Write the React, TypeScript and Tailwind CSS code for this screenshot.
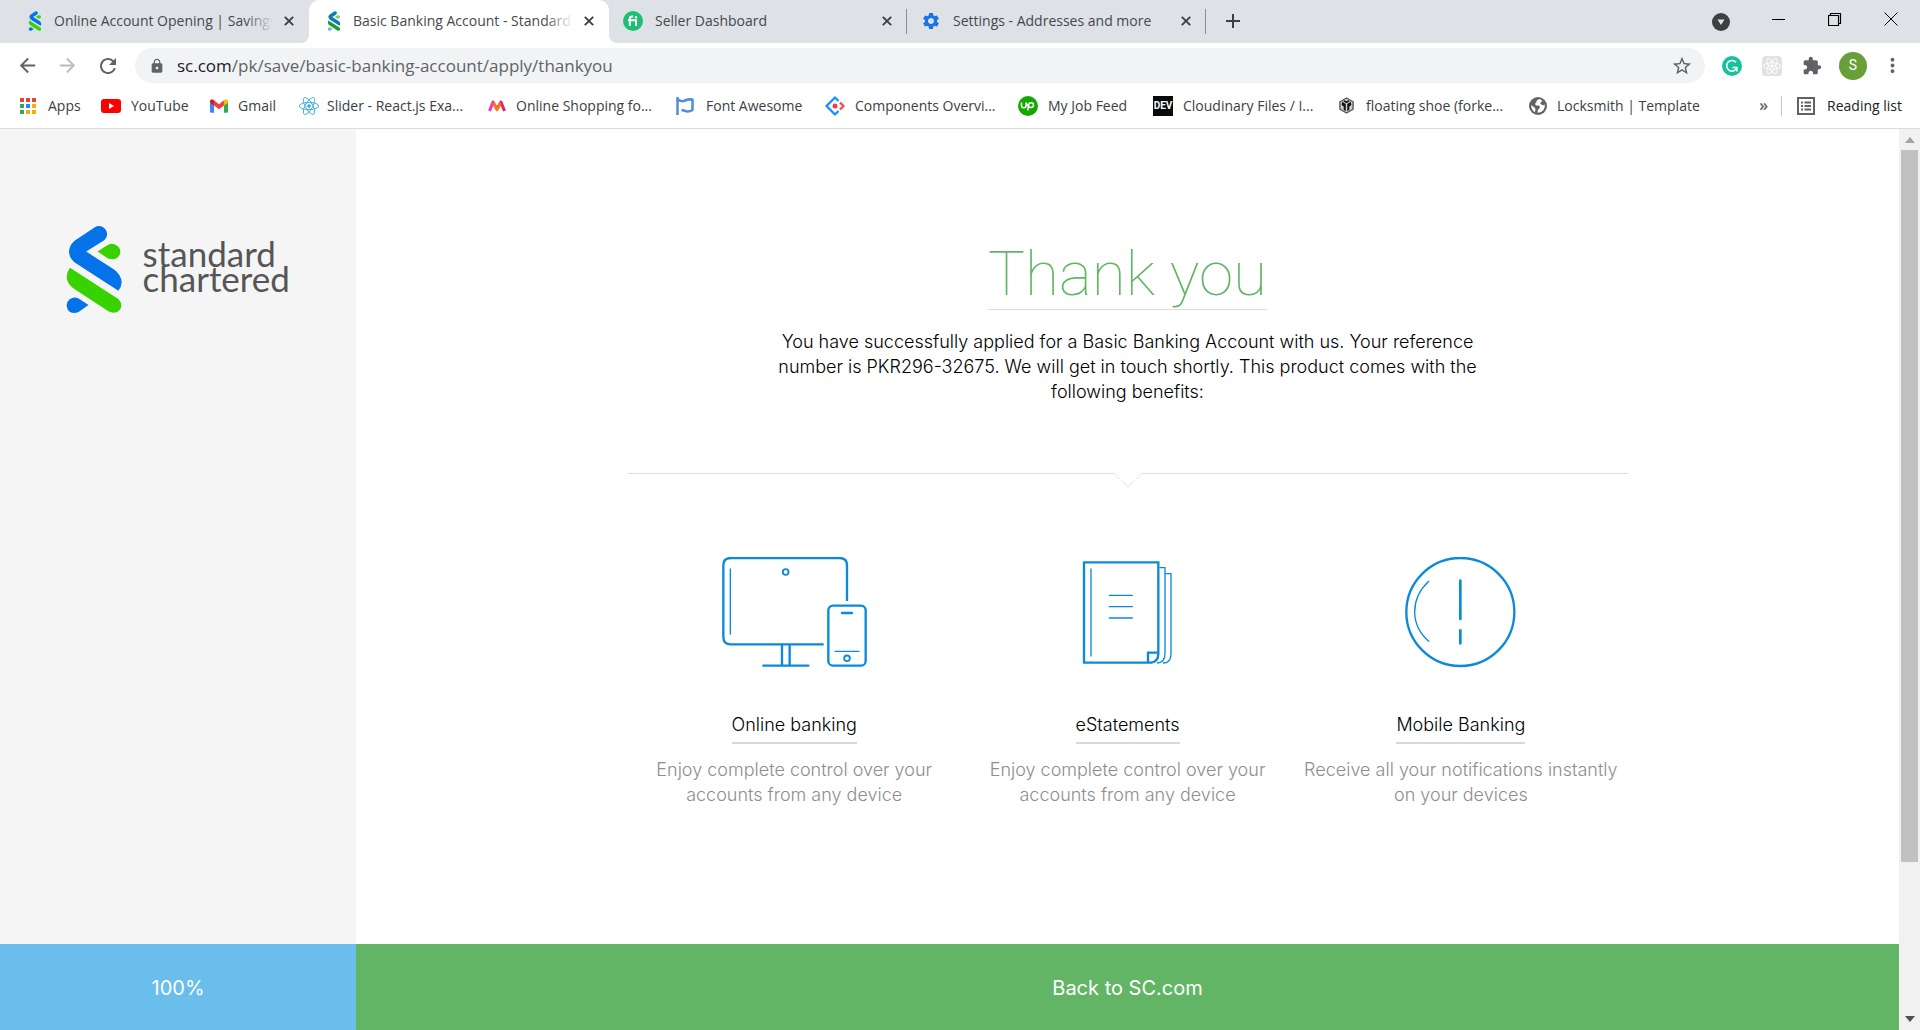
import React from "react";
import {
  MdArrowBack,
  MdArrowForward,
  MdExtension,
  MdLock,
  MdMoreVert,
  MdRefresh,
  MdSettings,
  MdStarBorder,
} from "react-icons/md";
import { FaReact } from "react-icons/fa";

/* ---------- logos and small drawings ---------- */

type RibbonProps = {
  className: string;
  top: string;
  drop: string;
  band: string;
  tail: string;
};

function Ribbon({ className, top, drop, band, tail }: RibbonProps) {
  return (
    <svg viewBox="76 76 169 266" className={className} aria-hidden="true">
      <path
        fill={top}
        d="M104 121 L162 82 Q174 74 187 81 Q200 89 200 103 Q199 115 189 122 L137 155 L221 209 Q243 225 244 248 Q243 263 234 273 L107 191 Q86 178 85 154 Q87 133 104 121Z"
      />
      <path fill={drop} d="M171 155 L203 134 Q218 128 230 137 Q240 144 240 155 Q240 167 230 174 Q219 181 203 176Z" />
      <path
        fill={band}
        d="M88 204 L221 290 Q243 301 243 317 Q242 332 229 338 Q216 342 204 335 L99 266 Q79 253 78 232 Q79 215 88 204Z"
      />
      <path fill={tail} d="M144 316 L113 296 Q99 290 87 299 Q78 306 78 317 Q79 331 88 337 Q100 343 114 337Z" />
    </svg>
  );
}

function CloseIcon() {
  return (
    <svg viewBox="0 0 10 10" className="h-[10px] w-[10px]" aria-hidden="true">
      <path d="M.8 .8 L9.2 9.2 M9.2 .8 L.8 9.2" stroke="#3c4043" strokeWidth="1.9" />
    </svg>
  );
}

function FiverrIcon() {
  return (
    <svg viewBox="0 0 20 20" className="h-5 w-5" aria-hidden="true">
      <circle cx="10" cy="10" r="10" fill="#1dbf73" />
      <path d="M6.800 15V8q0-2.400 2.400-2.400h1M5 9.200h8V15" fill="none" stroke="#fff" strokeWidth="2" />
      <circle cx="13" cy="6.200" r="1.200" fill="#fff" />
    </svg>
  );
}

function AppsIcon() {
  const colours = ["#ea4335", "#ea4335", "#ea4335", "#34a853", "#1a8cff", "#fbab05", "#34a853", "#fbab05", "#fbab05"];
  return (
    <svg viewBox="0 0 16 16" className="h-4 w-4" aria-hidden="true">
      {colours.map((fill, i) => (
        <rect key={i} x={(i % 3) * 6} y={Math.floor(i / 3) * 6} width="4" height="4" fill={fill} />
      ))}
    </svg>
  );
}

function YouTubeIcon() {
  return (
    <svg viewBox="0 0 20 14" className="h-[14px] w-5" aria-hidden="true">
      <rect width="20" height="14" rx="3" fill="#f00" />
      <path d="M8 4v6l5-3z" fill="#fff" />
    </svg>
  );
}

function GmailIcon() {
  return (
    <svg viewBox="0 0 20 15" className="h-[14px] w-[18px]" aria-hidden="true">
      <path d="M0 3v10.500Q0 15 1.500 15h3V6z" fill="#4285f4" />
      <path d="M20 3v10.500q0 1.500-1.500 1.500h-3V6z" fill="#34a853" />
      <path d="M4.500 1.200 L10 5.500 L15.500 1.200V7L10 11.200 L4.500 7z" fill="#ea4335" />
      <path d="M0 2.300Q0 .3 1.800 0 Q3 0 4.500 1.200V7L0 3.800z" fill="#c5221f" />
      <path d="M20 2.300Q20 .3 18.200 0 Q17 0 15.500 1.200V7L20 3.800z" fill="#fbbc04" />
    </svg>
  );
}

function MyntraIcon() {
  return (
    <svg viewBox="0 0 18 12" className="h-3 w-[18px]" aria-hidden="true">
      <path d="M1.500 11 L5 2 L9 9" fill="none" stroke="#f13ab1" strokeWidth="3" strokeLinejoin="round" />
      <path d="M9 9 L13 2 L16.500 11" fill="none" stroke="#e6206a" strokeWidth="3" strokeLinejoin="round" />
      <path d="M5.500 3 L9 10 L12.500 3" fill="none" stroke="#fd7a10" strokeWidth="2.600" strokeLinejoin="round" />
    </svg>
  );
}

function FlagIcon() {
  return (
    <svg viewBox="0 0 18 18" className="h-[18px] w-[18px]" aria-hidden="true">
      <path
        d="M1.500 0v18 M1.500 3h1.500q2.500 2 6 .5 t7.500-1v10.500 q-4 2.500-7.500 .8 l-3.500-.8"
        fill="none"
        stroke="#528dd7"
        strokeWidth="2.500"
        strokeLinejoin="round"
      />
    </svg>
  );
}

function DesignIcon() {
  return (
    <svg viewBox="0 0 20 20" className="h-5 w-5" aria-hidden="true">
      <path d="M13.500 5 L10 1.500 L1.500 10 L10 18.500 L13.500 15" fill="none" stroke="#1890ff" strokeWidth="2.400" strokeLinejoin="round" />
      <path d="M15 6.500 L18.500 10 L15 13.500" fill="none" stroke="#fa4a4d" strokeWidth="2.400" strokeLinejoin="round" />
      <circle cx="10" cy="10" r="2.500" fill="#f5384a" />
    </svg>
  );
}

function UpworkIcon() {
  return (
    <svg viewBox="0 0 20 20" className="h-5 w-5" aria-hidden="true">
      <circle cx="10" cy="10" r="10" fill="#14a800" />
      <path
        d="M3.500 6.500v3a2.300 2.300 0 0 0 4.600 0v-3 c1 3 2.500 5 5 5a2.400 2.400 0 1 0-2.400-2.400 L9.600 14.500"
        fill="none"
        stroke="#fff"
        strokeWidth="1.500"
      />
    </svg>
  );
}

function DevIcon() {
  return (
    <span className="flex h-5 w-5 items-center justify-center bg-[#0a0a0a] font-['Roboto'] text-[10px] font-bold text-white" aria-hidden="true">
      DEV
    </span>
  );
}

function CubeIcon() {
  return (
    <svg viewBox="0 0 16 18" className="h-[17px] w-[15px]" strokeLinejoin="round" aria-hidden="true">
      <path d="M8 1 L15 5v8L8 17L1 13V5z" fill="#d0d0d0" stroke="#555" strokeWidth="1.500" />
      <path d="M3.500 5 L7.200 7.500v7.500L5 13.500V10L2.800 8.500z M12.500 5 L8.800 7.500v7.500L11 13.500V10L13.200 8.500z M8 6.500L4.500 4.500L6 3.500L8 4.500L10 3.500L11.500 4.500z" fill="#111" />
    </svg>
  );
}

function GlobeIcon() {
  return (
    <svg viewBox="0 0 18 18" className="h-[18px] w-[18px]" aria-hidden="true">
      <circle cx="9" cy="9" r="9" fill="#5f6368" />
      <path d="M10.500 2 Q6.500 3.500 7.500 5.500 Q5 6.500 7 8.500 H10 Q11.500 9.500 10.500 11.500 L9 12.500 L8.500 15.800 Q12 16 14.500 13 Q16.300 10.500 15.800 7.500 Q14 9 12.500 7.500 Q10.500 7 12 5 L13.500 4Q12 2.300 10.500 2z" fill="#fff" />
      <path d="M2.200 8 L5.500 10.500 L6.500 12 L6 15.200 Q2 13 2.200 8z" fill="#fff" />
    </svg>
  );
}

function GrammarlyIcon() {
  return (
    <svg viewBox="0 0 20 20" className="h-5 w-5" aria-hidden="true">
      <circle cx="10" cy="10" r="10" fill="#15c39a" />
      <path d="M14 6.300 A5.300 5.300 0 1 0 14.800 12 M10.500 11.500h4.300v4" fill="none" stroke="#fff" strokeWidth="1.600" />
    </svg>
  );
}

function ReadingListIcon() {
  return (
    <svg viewBox="0 0 18 18" className="h-[18px] w-[18px]" aria-hidden="true">
      <path d="M1 1h16v16H1z" fill="none" stroke="#5f6368" strokeWidth="2" />
      <path d="M4 5.500h2M4 9h2M4 12.500h2M7.500 5.500h6.500M7.500 9h6.500M7.500 12.500h6.500" stroke="#5f6368" strokeWidth="1.800" />
    </svg>
  );
}

/* ---------- browser chrome ---------- */

function TabStrip() {
  return (
    <div className="flex h-[43px] shrink-0 bg-[#dee1e6] pr-4">
      <div className="flex w-[309px] items-center pb-px pl-7 pr-3">
        <Ribbon className="h-5 w-[14px]" top="#0473ea" drop="#38d200" band="#38d200" tail="#0473ea" />
        <TabTitle fade="from-transparent to-[#dee1e6]">Online Account Opening | Savings</TabTitle>
        <TabClose />
      </div>
      <div className="relative flex w-[300px] items-center rounded-t-[10px] bg-white pb-px pl-[18px] pr-3">
        <span className="absolute -left-2 bottom-0 h-2 w-2 bg-white">
          <span className="block h-2 w-2 rounded-br-lg bg-[#dee1e6]" />
        </span>
        <span className="absolute -right-2 bottom-0 h-2 w-2 bg-white">
          <span className="block h-2 w-2 rounded-bl-lg bg-[#dee1e6]" />
        </span>
        <Ribbon className="h-5 w-[14px]" top="#0a7bb5" drop="#8cc870" band="#1f9a3c" tail="#7cb5dc" />
        <TabTitle fade="from-transparent to-white">Basic Banking Account - Standard Chartered</TabTitle>
        <TabClose />
      </div>
      <div className="flex w-[298px] items-center pb-px pl-[14px]">
        <FiverrIcon />
        <TabTitle>Seller Dashboard</TabTitle>
        <TabClose />
        <span className="ml-[11px] h-[25px] w-px bg-[#8a8d91]" />
      </div>
      <div className="flex w-[299px] items-center pb-px pl-[14px]">
        <MdSettings className="h-5 w-5 text-[#1a73e8]" />
        <TabTitle>Settings - Addresses and more</TabTitle>
        <TabClose />
        <span className="ml-[11px] h-[25px] w-px bg-[#8a8d91]" />
      </div>
      <button aria-label="New tab" className="flex w-[54px] items-center justify-center pb-px">
        <svg viewBox="0 0 14 14" className="h-[14px] w-[14px]">
          <path d="M7 0v14M0 7h14" stroke="#3c4043" strokeWidth="2" />
        </svg>
      </button>
      <div className="ml-auto flex items-center gap-[42px] pr-[6px]">
        <button aria-label="Search tabs">
          <svg viewBox="0 0 18 18" className="h-[18px] w-[18px]">
            <circle cx="9" cy="9" r="9" fill="#3c4043" />
            <path d="M5.500 6.500h7L9 12z" fill="#dee1e6" />
          </svg>
        </button>
        <button aria-label="Minimize" className="pb-[6px]">
          <svg viewBox="0 0 14 14" className="h-[14px] w-[14px]">
            <path d="M0 7.500h13" stroke="#000" />
          </svg>
        </button>
        <button aria-label="Restore" className="pb-[6px]">
          <svg viewBox="0 0 14 14" className="h-[14px] w-[14px]">
            <path d="M.5 3.500h10v10H.5z M2.500 3V1.500h10v10H11" fill="none" stroke="#000" strokeWidth="1.200" />
          </svg>
        </button>
        <button aria-label="Close window" className="pb-[6px]">
          <svg viewBox="0 0 14 14" className="h-[14px] w-[14px]">
            <path d="M.5 .5l13 13M13.500 .5l-13 13" stroke="#000" />
          </svg>
        </button>
      </div>
    </div>
  );
}

function TabTitle({ children, fade }: { children: React.ReactNode; fade?: string }) {
  return (
    <span className="relative ml-[10px] mr-2 min-w-0 flex-1 overflow-hidden whitespace-nowrap pl-[2px] text-[14px] leading-5 text-[#45494d]">
      {children}
      {fade && <span className={"absolute inset-y-0 right-0 w-7 bg-linear-to-r " + fade} />}
    </span>
  );
}

function TabClose() {
  return (
    <button aria-label="Close tab" className="flex h-5 w-4 items-center justify-center">
      <CloseIcon />
    </button>
  );
}

function Toolbar() {
  return (
    <div className="flex h-[45px] shrink-0 items-center pl-4 pr-4 text-[#5f6368]">
      <button aria-label="Back"><MdArrowBack className="h-[23px] w-[23px]" /></button>
      <button aria-label="Forward" className="ml-[17px]"><MdArrowForward className="h-[23px] w-[23px] text-[#babcbe]" /></button>
      <button aria-label="Reload" className="ml-[17px]"><MdRefresh className="h-6 w-6" /></button>
      <div className="ml-[15px] flex h-[35px] flex-1 items-center rounded-full bg-[#f1f3f4] pl-[14px] pr-3">
        <MdLock className="h-4 w-4" />
        <label className="ml-3 flex flex-1 items-center text-[17px] leading-6">
          <span className="text-[#202124]">sc.com</span>
          <input
            readOnly
            className="h-6 min-w-0 flex-1 bg-transparent text-[#5f6368] outline-none"
            value="/pk/save/basic-banking-account/apply/thankyou"
          />
        </label>
        <button aria-label="Bookmark this tab"><MdStarBorder className="h-[22px] w-[22px]" /></button>
      </div>
      <div className="flex items-center gap-5 pl-[17px]">
        <button aria-label="Grammarly"><GrammarlyIcon /></button>
        <button aria-label="React Developer Tools" className="flex h-5 w-5 items-center justify-center rounded-sm bg-[#e2e2e2]">
          <FaReact className="h-[18px] w-[18px] text-white" />
        </button>
        <button aria-label="Extensions"><MdExtension className="h-5 w-5" /></button>
      </div>
      <button aria-label="Profile" className="ml-[17px] flex h-7 w-7 items-center justify-center rounded-full bg-[#689f38] font-['Roboto'] text-[14px] text-white">
        S
      </button>
      <button aria-label="Menu" className="ml-[14px]"><MdMoreVert className="h-[23px] w-[23px]" /></button>
    </div>
  );
}

const bookmarks = [
  { label: "Apps", width: "w-[81px]", icon: <AppsIcon />, gap: "ml-3" },
  { label: "YouTube", width: "w-[109px]", icon: <YouTubeIcon />, gap: "ml-[10px]" },
  { label: "Gmail", width: "w-[89px]", icon: <GmailIcon />, gap: "ml-[10px]" },
  { label: "Slider - React.js Exa...", width: "w-[189px]", icon: <FaReact className="h-5 w-5 text-[#3ba9d8]" />, gap: "ml-2" },
  { label: "Online Shopping fo...", width: "w-[188px]", icon: <MyntraIcon />, gap: "ml-[10px]" },
  { label: "Font Awesome", width: "w-[149px]", icon: <FlagIcon />, gap: "ml-3" },
  { label: "Components Overvi...", width: "w-[193px]", icon: <DesignIcon />, gap: "ml-[10px]" },
  { label: "My Job Feed", width: "w-[135px]", icon: <UpworkIcon />, gap: "ml-[10px]" },
  { label: "Cloudinary Files / I...", width: "w-[186px]", icon: <DevIcon />, gap: "ml-[10px]" },
  { label: "floating shoe (forke...", width: "w-[190px]", icon: <CubeIcon />, gap: "ml-3" },
  { label: "Locksmith | Template", width: "w-[180px]", icon: <GlobeIcon />, gap: "ml-[10px]" },
];

function BookmarksBar() {
  return (
    <nav aria-label="Bookmarks" className="flex h-[41px] shrink-0 items-center border-b border-[#dadce0] pb-[5px] pl-5 pr-[18px] text-[14px] text-[#3c4043]">
      {bookmarks.map((b) => (
        <a key={b.label} href="#" className={"flex shrink-0 items-center whitespace-nowrap " + b.width}>
          {b.icon}
          <span className={b.gap}>{b.label}</span>
        </a>
      ))}
      <button aria-label="More bookmarks" className="ml-auto mr-[13px] pb-[2px] text-[16px] font-semibold text-[#5f6368]">»</button>
      <span className="h-5 w-px bg-[#c4c7cb]" />
      <button className="ml-[15px] flex items-center gap-3 whitespace-nowrap text-[#202124]">
        <ReadingListIcon />
        Reading list
      </button>
    </nav>
  );
}

/* ---------- page ---------- */

const line = { fill: "none", stroke: "#0a8ad8" };

function DevicesDrawing() {
  return (
    <svg viewBox="66 51 435 336" className="h-28 w-[145px]" {...line} strokeWidth="7" strokeLinecap="round" aria-hidden="true">
      <path d="M441 183 V76 Q441 54 419 54 H92 Q70 54 70 76 V290 Q70 313 92 313 H371" strokeLinecap="butt" />
      <path d="M246 316v58M269 316v58M190 377h135" />
      <rect x="385" y="197" width="112" height="180" rx="14" />
      <path d="M426 219h30" />
      <path d="M405 334h72M91 87v195" strokeWidth="4" />
      <circle cx="257" cy="96" r="8.500" strokeWidth="5.500" />
      <circle cx="441" cy="355" r="8.500" strokeWidth="5.500" />
    </svg>
  );
}

function StatementsDrawing() {
  return (
    <svg viewBox="67 51 273 336" className="h-28 w-[91px]" {...line} strokeWidth="7" aria-hidden="true">
      <path d="M278 368 H73 V67 H296 V340 Q296 368 272 368" />
      <path d="M265 368 V338 H294" />
      <path d="M299 83h17v257q0 29-24 29M318 101h16v240q0 28-24 28" strokeWidth="4" />
      <path d="M94 87v261M149 166h69M149 200h69M149 234h69" strokeWidth="4" strokeLinecap="round" />
    </svg>
  );
}

function AlertDrawing() {
  return (
    <svg viewBox="74 51 336 336" className="h-28 w-28" {...line} strokeWidth="7" strokeLinecap="round" aria-hidden="true">
      <circle cx="240" cy="216" r="162" />
      <path d="M240 122v115M240 271v39" strokeWidth="8" />
      <path d="M145 124Q103 164 103 215T145 304" strokeWidth="4" />
    </svg>
  );
}

const benefits = [
  { title: "Online banking", text: "Enjoy complete control over your accounts from any device", art: <DevicesDrawing /> },
  { title: "eStatements", text: "Enjoy complete control over your accounts from any device", art: <StatementsDrawing /> },
  { title: "Mobile Banking", text: "Receive all your notifications instantly on your devices", art: <AlertDrawing /> },
];

function Sidebar() {
  return (
    <aside className="flex w-[18.75%] shrink-0 flex-col bg-[#f5f5f5]">
      <a href="#" aria-label="Standard Chartered" className="mt-[96px] flex items-center justify-center gap-[21px]">
        <Ribbon className="h-[89px] w-[56px]" top="#0473ea" drop="#38d200" band="#38d200" tail="#0473ea" />
        <span className="w-[148px] pb-2 font-['Lato'] text-[35px] leading-[25px] text-[#555658]">
          standard chartered
        </span>
      </a>
      <div className="mt-auto flex h-[86px] items-center justify-center bg-[#69beec] pt-[2px] text-[20px] text-white">100%</div>
    </aside>
  );
}

function ThankYou() {
  return (
    <main className="flex min-w-0 flex-1 flex-col bg-white">
      <div className="mx-auto flex w-full max-w-[1000px] flex-col items-center pt-[105px]">
        <h1 className="border-b border-[#dcdcdc] pt-1 font-['Roboto'] text-[62px] font-thin leading-[71px] text-[#62b565]">Thank you</h1>
        <p className="mt-[19px] w-[700px] max-w-full text-center text-[18px] font-light leading-[25px] text-black">
          You have successfully applied for a Basic Banking Account with us. Your reference number is PKR296-32675. We will get in touch shortly. This product comes with the following benefits:
        </p>
        <div className="mt-[69px] flex w-full items-start" role="separator">
          <span className="h-px flex-1 bg-[#dfdfdf]" />
          <svg viewBox="0 0 28 15" className="h-[15px] w-7" aria-hidden="true">
            <path d="M0 .5 L14 14 L28 .5" fill="none" stroke="#e4e4e4" />
          </svg>
          <span className="h-px flex-1 bg-[#dfdfdf]" />
        </div>
        <ul className="mt-[69px] grid w-full grid-cols-3">
          {benefits.map((b) => (
            <li key={b.title} className="flex flex-col items-center text-center text-[18px] font-light leading-[25px]">
              {b.art}
              <h2 className="mt-[43px] border-b-2 border-[#d8d8d8] pb-[5px] font-light text-black">{b.title}</h2>
              <p className="mt-[13px] text-[#8e8e8e]">{b.text}</p>
            </li>
          ))}
        </ul>
      </div>
      <a href="#" className="mt-auto flex h-[86px] items-center justify-center bg-[#62b565] pt-[2px] text-[20px] text-white">Back to SC.com</a>
    </main>
  );
}

function Scrollbar() {
  return (
    <div className="flex w-[21px] shrink-0 flex-col items-center bg-[#f1f1f1] py-2" aria-hidden="true">
      <svg viewBox="0 0 10 6" className="h-[6px] w-[10px]"><path d="M0 6L5 0L10 6z" fill="#a3a3a3" /></svg>
      <div className="mt-[7px] h-[80.5%] w-[17px] bg-[#c1c1c1]" />
      <svg viewBox="0 0 10 6" className="mt-auto h-[6px] w-[10px]"><path d="M0 0L5 6L10 0z" fill="#505050" /></svg>
    </div>
  );
}

export default function App() {
  return (
    <div className="flex h-screen flex-col overflow-hidden bg-white font-['Open_Sans',sans-serif]">
      <TabStrip />
      <Toolbar />
      <BookmarksBar />
      <div className="flex min-h-0 flex-1">
        <div className="flex min-w-0 flex-1 font-['Inter','Liberation_Sans',sans-serif]">
          <Sidebar />
          <ThankYou />
        </div>
        <Scrollbar />
      </div>
    </div>
  );
}
